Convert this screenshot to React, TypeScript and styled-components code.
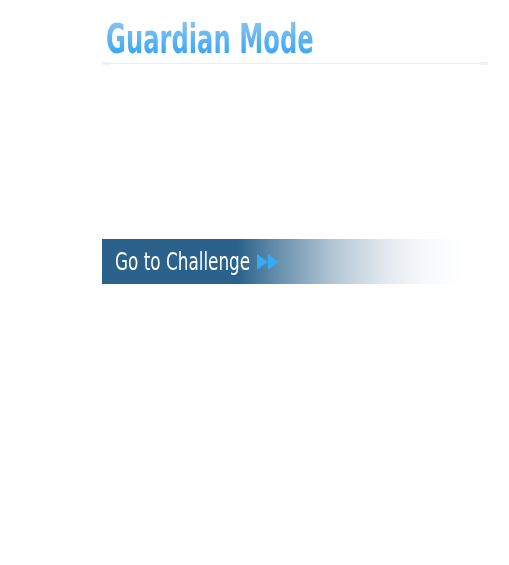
import React from "react";
import styled, { createGlobalStyle } from "styled-components";

const Global = createGlobalStyle`
  html, body { margin: 0; padding: 0; background: #ffffff; }
  body { font-family: "DejaVu Sans Condensed", "DejaVu Sans", sans-serif; }
`;

const Page = styled.div`
  width: 509px;
  height: 565px;
  box-sizing: border-box;
  padding: 16px 21px 0 102px;
  display: flex;
  flex-direction: column;
`;

const TitleRow = styled.div`
  height: 46px;
  padding-left: 4px;
`;

const Title = styled.h1`
  margin: 0;
  display: inline-block;
  font-family: "DejaVu Sans Condensed", "DejaVu Sans", sans-serif;
  font-weight: 700;
  font-size: 41px;
  line-height: 46px;
  background: linear-gradient(180deg, #8cc3f0 10%, #31a5f6 90%);
  -webkit-background-clip: text;
  background-clip: text;
  color: transparent;
  white-space: nowrap;
  transform: scaleX(0.657);
  transform-origin: left center;
`;

const Divider = styled.div`
  height: 3px;
  display: flex;
  align-items: center;
  &::before {
    content: "";
    flex: 1;
    height: 1px;
    background: #ececec;
  }
`;

const Cap = styled.span<{ $end?: boolean }>`
  width: 8px;
  height: 3px;
  background: #f0f0f0;
  flex: none;
  order: ${(p) => (p.$end ? 2 : -1)};
`;

const Spacer = styled.div`
  height: 174px;
`;

const ChallengeButton = styled.a`
  display: flex;
  align-items: center;
  width: 356px;
  height: 45px;
  box-sizing: border-box;
  padding-left: 13px;
  background: linear-gradient(
    90deg,
    #2a628b 0%,
    #2a628b 38%,
    #6a91ae 50%,
    #b3c6d5 65%,
    #e4eaf0 80%,
    #f6f8fa 90%,
    #fdfeff 100%
  );
  text-decoration: none;
  cursor: pointer;
`;

const ButtonContent = styled.span`
  display: flex;
  align-items: center;
  gap: 9px;
  transform: scaleX(0.78);
  transform-origin: left center;
`;

const ButtonLabel = styled.span`
  color: #ffffff;
  font-family: "DejaVu Sans Condensed", "DejaVu Sans", sans-serif;
  font-size: 24px;
  font-weight: 400;
  line-height: 1;
  white-space: nowrap;
`;

const FastForward = () => (
  <svg width="28" height="16" viewBox="0 0 28 16" aria-hidden="true" preserveAspectRatio="none">
    <polygon points="0,0 14,8 0,16" fill="#37a9f5" />
    <polygon points="14,0 28,8 14,16" fill="#37a9f5" />
  </svg>
);

export default function App() {
  return (
    <>
      <Global />
      <Page>
        <TitleRow>
          <Title>Guardian Mode</Title>
        </TitleRow>
        <Divider>
          <Cap />
          <Cap $end />
        </Divider>
        <Spacer />
        <ChallengeButton>
          <ButtonContent>
            <ButtonLabel>Go to Challenge</ButtonLabel>
            <FastForward />
          </ButtonContent>
        </ChallengeButton>
      </Page>
    </>
  );
}
